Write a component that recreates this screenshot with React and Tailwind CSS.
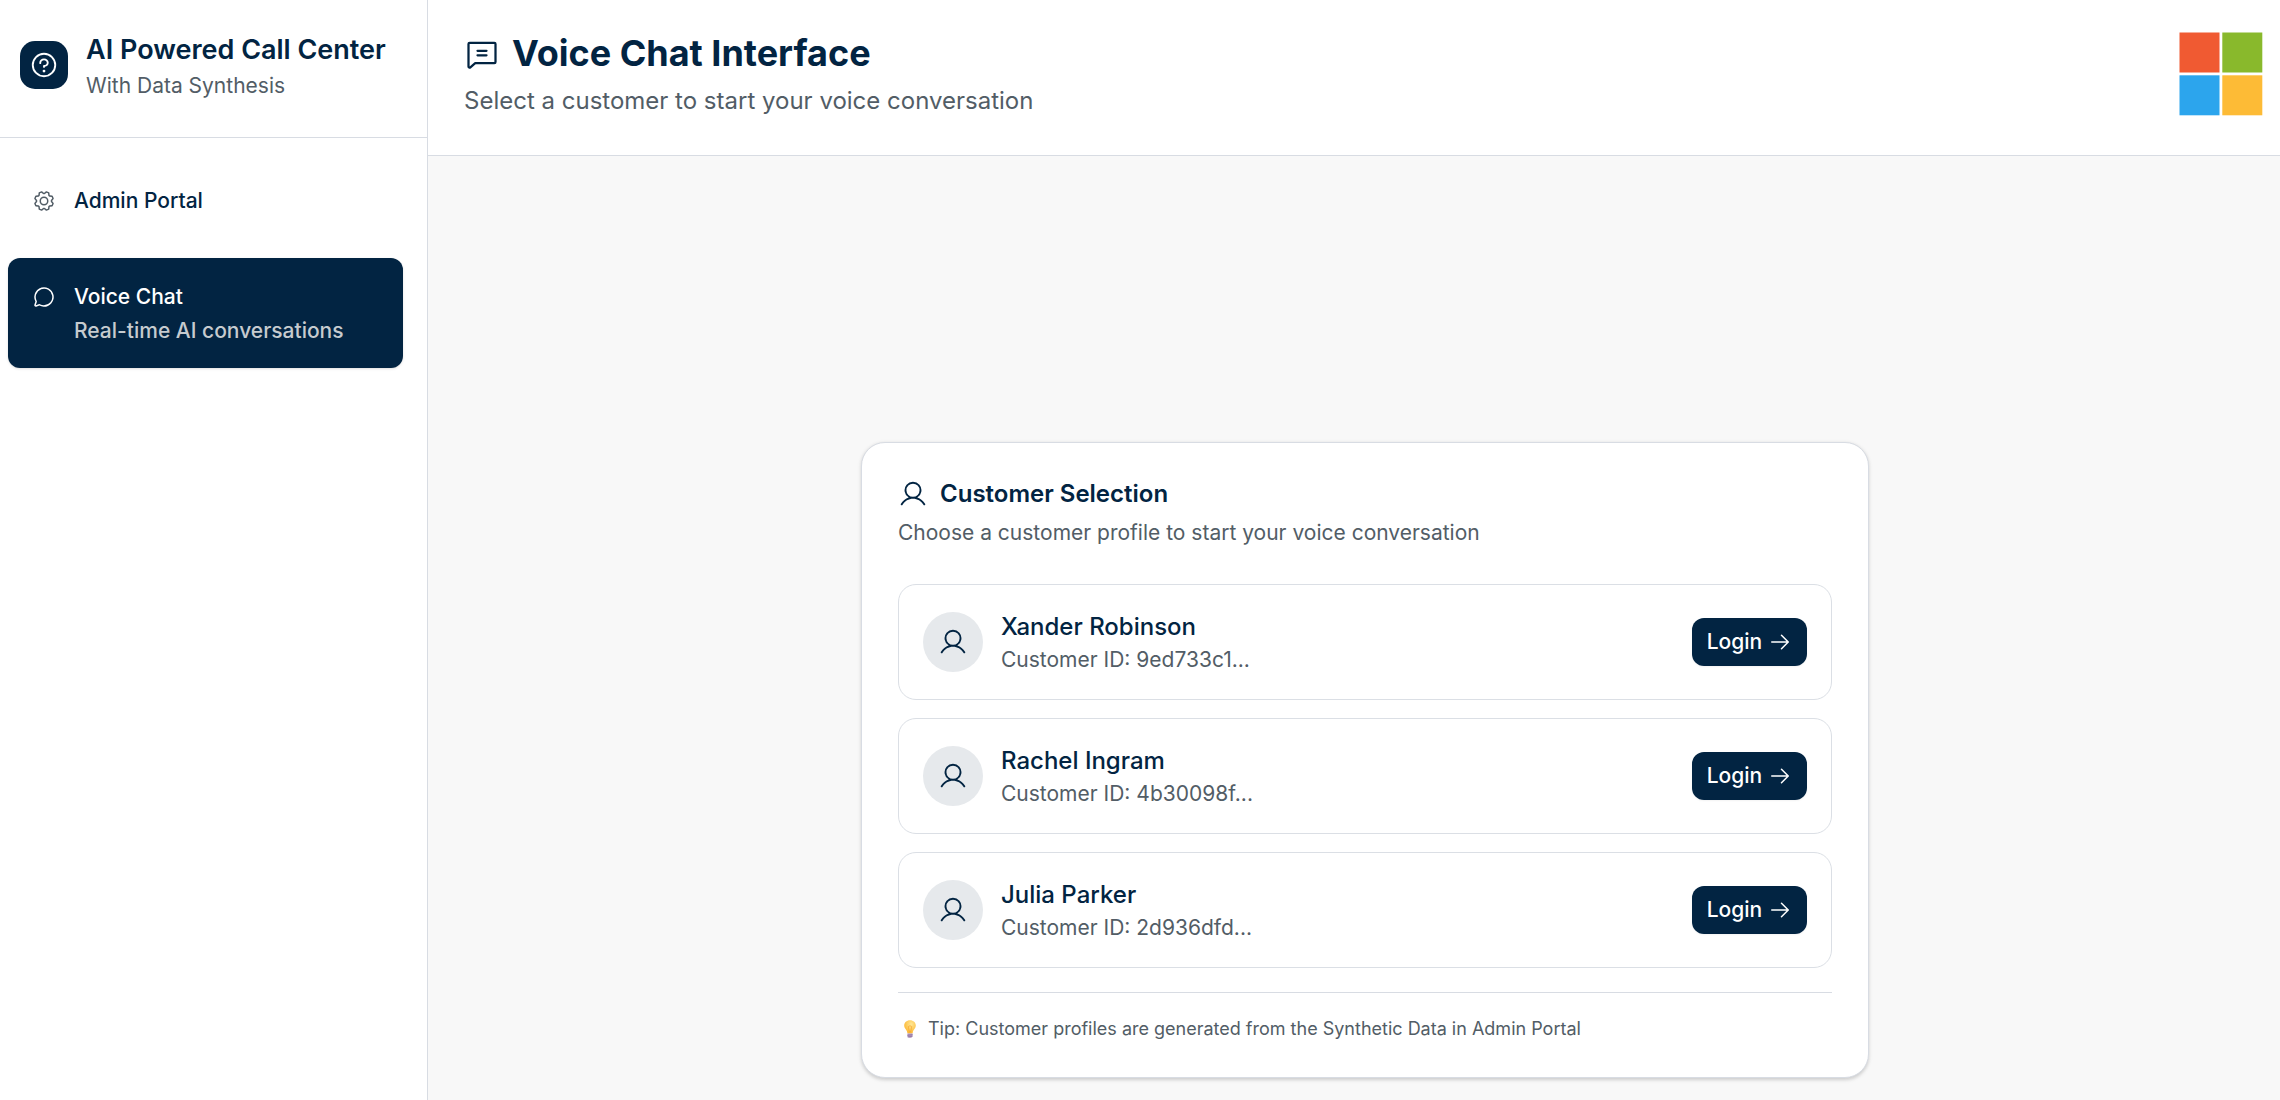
import { PiArrowRight, PiChatCircle, PiChatText, PiGear, PiQuestion, PiUser } from "react-icons/pi";

const customers = [
  { name: "Xander Robinson", id: "9ed733c1..." },
  { name: "Rachel Ingram", id: "4b30098f..." },
  { name: "Julia Parker", id: "2d936dfd..." },
];

function Logo() {
  return (
    <svg className="h-[84px] w-[84px]" viewBox="0 0 84 84">
      <rect x="0.5" y="0.5" width="40" height="40" fill="#f05a32" />
      <rect x="43.3" y="0.5" width="40" height="40" fill="#89b92c" />
      <rect x="0.5" y="43.3" width="40" height="40" fill="#2ca5ed" />
      <rect x="43.3" y="43.3" width="40" height="40" fill="#fdbb36" />
    </svg>
  );
}

function Bulb() {
  return (
    <svg className="h-[18px] w-[12px]" viewBox="0 0 12 18">
      <defs>
        <radialGradient id="bulb" cx="0.6" cy="0.3" r="0.7">
          <stop offset="0" stopColor="#ffe795" />
          <stop offset="1" stopColor="#fdb62f" />
        </radialGradient>
      </defs>
      <path d="M6 0.2C2.6 0.2 0.2 2.5 0.2 5.5C0.2 8.6 2.8 9.6 3.2 12.2C3.3 13 3.6 13.4 4 13.6H8C8.4 13.4 8.7 13 8.8 12.2C9.2 9.6 11.8 8.6 11.8 5.5C11.8 2.5 9.4 0.2 6 0.2Z" fill="url(#bulb)" />
      <path d="M4.3 6.6Q6 4.8 7.7 6.6L6.7 12H5.3Z" fill="none" stroke="#f3a02c" strokeWidth="0.6" />
      <path d="M3.4 13.4H8.6V16.4L7.2 17.8H4.8L3.4 16.4Z" fill="#b096bd" />
      <path d="M3.4 15.4L8.6 14.6M3.6 17L8.4 16.2" stroke="#8e719f" strokeWidth="0.7" />
    </svg>
  );
}

function Sidebar() {
  return (
    <aside className="h-full w-[428px] shrink-0 border-r border-[#d8dce3] bg-white">
      <div className="flex h-[138px] items-start gap-[18px] border-b border-[#d8dce3] pl-5 pt-[29px]">
        <div className="mt-3 flex size-12 items-center justify-center rounded-[15px] bg-[#022442] text-white">
          <PiQuestion className="size-[30px]" />
        </div>
        <div>
          <h2 className="text-[27px] leading-[42px] font-semibold whitespace-nowrap">AI Powered Call Center</h2>
          <p className="text-[21px] leading-[30px] text-[#525d66]">With Data Synthesis</p>
        </div>
      </div>
      <nav className="flex flex-col pl-2 text-[21px] font-medium">
        <div className="mt-[45px] flex h-9 items-center gap-[18px] pl-6">
          <PiGear className="size-6 text-[#525d66]" />
          <span>Admin Portal</span>
        </div>
        <div className="mt-[39px] flex h-[110px] w-[395px] gap-[18px] rounded-xl bg-[#022442] pt-[22px] pl-6 text-white shadow-sm">
          <PiChatCircle className="mt-[5px] size-6" />
          <div className="leading-[34px]">
            <div>Voice Chat</div>
            <div className="text-[#c6cbcf]">Real-time AI conversations</div>
          </div>
        </div>
      </nav>
    </aside>
  );
}

function CustomerRow({ name, id }) {
  return (
    <div className="flex h-[116px] items-center rounded-[18px] border border-[#dbdfe5] px-6">
      <div className="flex size-[60px] items-center justify-center rounded-full bg-[#e6e9ec]">
        <PiUser className="size-[30px]" />
      </div>
      <div className="ml-[18px] flex-1">
        <div className="text-2xl leading-9 font-medium">{name}</div>
        <div className="text-[21px] leading-[30px] text-[#525d66]">Customer ID: {id}</div>
      </div>
      <button className="flex h-12 w-[115px] items-center justify-center gap-1.5 rounded-xl bg-[#022442] text-[21px] font-medium text-white shadow-xs">
        Login
        <PiArrowRight className="size-6" />
      </button>
    </div>
  );
}

export default function App() {
  return (
    <div className="flex h-[1100px] w-[2280px] overflow-hidden bg-[#f8f8f8] font-['Inter',sans-serif] text-[#022442]">
      <Sidebar />
      <div className="flex flex-1 flex-col">
        <header className="flex h-[156px] items-start justify-between border-b border-[#d8dce3] bg-white pr-[17px] pl-9">
          <div className="pt-[29px]">
            <h1 className="flex items-center gap-3 text-4xl leading-[48px] font-bold">
              <PiChatText className="size-9" />
              Voice Chat Interface
            </h1>
            <p className="mt-1.5 text-2xl leading-9 text-[#525d66]">Select a customer to start your voice conversation</p>
          </div>
          <div className="pt-8">
            <Logo />
          </div>
        </header>
        <main className="flex flex-1 justify-center pt-[286px] pl-[22px]">
          <section className="h-[636px] w-[1008px] rounded-3xl border border-[#d8dce3] bg-white px-9 pt-[33px] shadow-[0_1.5px_4.5px_rgba(0,0,0,0.1),0_1.5px_3px_rgba(0,0,0,0.08)]">
            <h3 className="flex items-center gap-3 text-2xl leading-9 font-semibold">
              <PiUser className="size-[30px]" />
              Customer Selection
            </h3>
            <p className="mt-1.5 text-[21px] leading-[30px] text-[#525d66]">Choose a customer profile to start your voice conversation</p>
            <div className="mt-9 flex flex-col gap-[18px]">
              {customers.map((c) => (
                <CustomerRow key={c.id} name={c.name} id={c.id} />
              ))}
            </div>
            <div className="mt-6 flex items-center gap-3 border-t border-[#d8dce3] pt-[22px] pl-1.5 text-lg text-[#525d66]">
              <Bulb />
              Tip: Customer profiles are generated from the Synthetic Data in Admin Portal
            </div>
          </section>
        </main>
      </div>
    </div>
  );
}
